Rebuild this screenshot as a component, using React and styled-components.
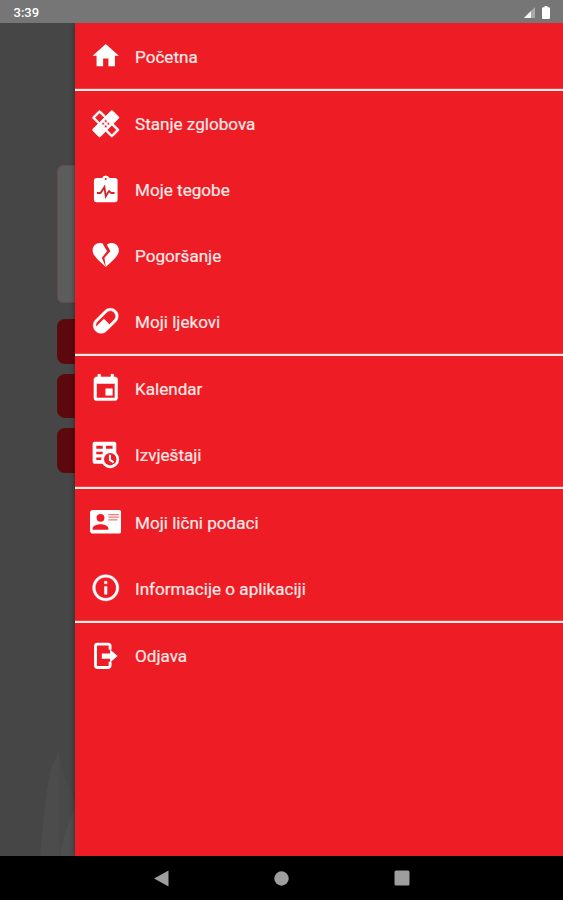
import React from 'react';
import styled, { createGlobalStyle } from 'styled-components';
import { MdHome, MdHealing, MdEvent, MdInfoOutline } from 'react-icons/md';

const GlobalStyle = createGlobalStyle`
  * {
    box-sizing: border-box;
  }

  body {
    margin: 0;
    background: #000;
    font-family: Roboto, 'Liberation Sans', sans-serif;
  }
`;

const Screen = styled.div`
  display: flex;
  flex-direction: column;
  width: 100%;
  height: 100vh;
  overflow: hidden;
`;

const StatusBar = styled.header`
  display: flex;
  align-items: center;
  justify-content: space-between;
  flex: none;
  height: 23px;
  padding: 2px 13px 0 13.5px;
  background: #767676;
`;

const Clock = styled.span`
  color: #fff;
  font-size: 13px;
  font-weight: 500;
`;

const StatusIcons = styled.div`
  display: flex;
  align-items: center;
  gap: 7px;

  svg {
    display: block;
  }
`;

const Body = styled.div`
  position: relative;
  flex: 1;
  min-height: 0;
  overflow: hidden;
  background: #464646;
`;

const Wave = styled.svg`
  position: absolute;
  left: 40px;
  bottom: 0;
`;

// Página por baixo do menu
const Page = styled.main`
  display: flex;
  flex-direction: column;
  gap: 10px;
  padding: 142px 57px 0;
`;

const Card = styled.div`
  height: 138px;
  margin-bottom: 6px;
  border: 1px solid #674a4a;
  border-radius: 6px;
  background: #5b5c5b;
`;

const PageButton = styled.div`
  height: 44.5px;
  border-radius: 8px;
  background: #5b090d;
`;

const Drawer = styled.nav`
  position: absolute;
  top: 0;
  right: 0;
  bottom: 0;
  left: 75px;
  background: #ee1c24;
  box-shadow: 0 0 5px rgba(0, 0, 0, 0.45);
`;

const Group = styled.ul`
  margin: 0;
  padding: 0;
  list-style: none;

  & + & {
    border-top: 2px solid #ffe9e6;
    box-shadow: 0 -1px 0 #f0453f;
  }
`;

const Item = styled.li`
  display: flex;
  align-items: center;
  height: 65.75px;
  padding: 1.5px 0 0 14.5px;
  gap: 14px;
  color: #fff;
`;

const IconBox = styled.span`
  display: flex;
  flex: none;
  width: 31.5px;
  height: 31.5px;
  margin-top: -1.5px;

  svg {
    width: 100%;
    height: 100%;
    stroke-width: ${({ $weight }) => $weight || 0}px;
  }

  /* o pacote inclui um quadrado vazio de 24x24 */
  svg > path[d^='M0 0h24'] {
    stroke: none;
  }
`;

const Label = styled.span`
  color: #ffe9e8;
  font-size: 17.1px;
  font-weight: 400;
  line-height: 20px;
  -webkit-text-stroke: 0.2px #ffe9e8;
`;

const NavBar = styled.footer`
  display: flex;
  align-items: center;
  justify-content: center;
  flex: none;
  gap: 105px;
  height: 44px;
  background: #000;
`;

const Svg = ({ children }) => (
  <svg viewBox="0 0 24 24" fill="currentColor">
    {children}
  </svg>
);

const ClipboardPulse = () => (
  <Svg>
    <path
      fillRule="evenodd"
      d="M19 3h-4.200a3 3 0 0 0-5.600 0H5a2 2 0 0 0-2 2v14.500a2 2 0 0 0 2 2h14a2 2 0 0 0 2-2V5a2 2 0 0 0-2-2zM12 3a.8.8 0 1 1 0 1.600.8.8 0 0 1 0-1.600z"
    />
    <path
      d="M5.300 14.500h2.700l3-4.500 1 7 2.500-4 1.700 1.500h2.500"
      fill="none"
      stroke="#d5222a"
      strokeWidth="1.400"
    />
  </Svg>
);

const HeartBroken = () => (
  <Svg>
    <path d="M12 21.350l-1.450-1.320C5.400 15.360 2 12.280 2 8.500 2 5.420 4.420 3 7.500 3c.67 0 1.320.12 1.940.33L13 9.350l-4 5 3 7M16.500 3C19.580 3 22 5.420 22 8.500c0 3.780-3.400 6.860-8.550 11.530L12 21.350l-1-7 4.500-5-2.650-5.080C13.870 3.470 15.170 3 16.500 3z" />
  </Svg>
);

const Pill = () => (
  <Svg>
    <path
      fillRule="evenodd"
      stroke="currentColor"
      strokeWidth="0.300"
      d="M4.220 11.290l7.070-7.070c2.350-2.340 6.140-2.340 8.490 0 2.340 2.340 2.340 6.140 0 8.490l-7.070 7.070c-2.350 2.340-6.150 2.340-8.490 0-2.340-2.350-2.340-6.140 0-8.490m1.420 1.420c-1.050 1.040-1.400 2.530-1.040 3.860l5.990-5.980 4.240 4.240 3.530-3.540c1.570-1.560 1.570-4.090 0-5.650-1.560-1.570-4.090-1.570-5.650 0z"
    />
  </Svg>
);

const TableClock = () => (
  <Svg>
    <path
      fillRule="evenodd"
      d="M3.500 2h15A1.500 1.500 0 0 1 20 3.500V16H12v2.800H3.500A1.500 1.500 0 0 1 2 17.300V3.500A1.500 1.500 0 0 1 3.500 2zM4.800 5.200v2.200h4.900V5.200zM12.200 5.200v2.200h5V5.200zM4.800 9.700v2h4.900v-2zM4.800 14v2h4.500v-2z"
    />
    <circle cx="15.400" cy="15.400" r="6.800" />
    <circle cx="15.400" cy="15.400" r="4.700" fill="#ee1c24" />
    <path d="M15.200 12v4l2.800 1.800" fill="none" stroke="currentColor" strokeWidth="1.600" />
  </Svg>
);

const IdCard = () => (
  <Svg>
    <path
      fillRule="evenodd"
      d="M2 3h20c1.050 0 2 .95 2 2v14c0 1.050-.95 2-2 2H2c-1.050 0-2-.95-2-2V5c0-1.050.95-2 2-2m6 10.910C6 13.910 2 15 2 17v1h12v-1c0-2-4-3.090-6-3.090M8 6a3 3 0 0 0 0 6 3 3 0 0 0 0-6z"
    />
    <path d="M14 6.500h8M14 8.500h8M14 10.500h7" stroke="#f4777a" strokeWidth="1" fill="none" />
  </Svg>
);

const Logout = () => (
  <Svg>
    <path
      d="M15.300 7.500V4.600a1.500 1.500 0 0 0-1.500-1.500H5.700a1.500 1.500 0 0 0-1.500 1.500v14.800a1.500 1.500 0 0 0 1.500 1.500h8.100a1.500 1.500 0 0 0 1.500-1.500v-2.900"
      fill="none"
      stroke="currentColor"
      strokeWidth="2.200"
    />
    <path d="M9 10.200h6.300V7.300l5.700 4.900-5.700 4.900v-2.900H9z" />
  </Svg>
);

const groups = [
  [{ label: 'Početna', icon: MdHome }],
  [
    { label: 'Stanje zglobova', icon: MdHealing, weight: 0.5 },
    { label: 'Moje tegobe', icon: ClipboardPulse },
    { label: 'Pogoršanje', icon: HeartBroken },
    { label: 'Moji ljekovi', icon: Pill },
  ],
  [
    { label: 'Kalendar', icon: MdEvent, weight: 0.4 },
    { label: 'Izvještaji', icon: TableClock },
  ],
  [
    { label: 'Moji lični podaci', icon: IdCard },
    { label: 'Informacije o aplikaciji', icon: MdInfoOutline, weight: 0.3 },
  ],
  [{ label: 'Odjava', icon: Logout }],
];

const App = () => (
  <>
    <GlobalStyle />
    <Screen>
      <StatusBar>
        <Clock>3:39</Clock>
        <StatusIcons>
          <svg width="11" height="11" viewBox="0 0 11 11">
            <path d="M0 11L11 0v11z" fill="#a9a9a9" />
            <path d="M0 11l7-7v7z" fill="#f4f4f4" />
          </svg>
          <svg width="8" height="13" viewBox="0 0 8 13">
            <path d="M2.500 0h3v1.200H7.200l.8.8v10.200l-.8.8H.8l-.8-.8V2l.8-.8h1.700z" fill="#fff" />
          </svg>
        </StatusIcons>
      </StatusBar>
      <Body>
        <Wave width="40" height="104" viewBox="0 0 40 104">
          <path d="M0 104C3 75 6 38 11 16L19 0v104z" fill="#4c4c4c" />
          <path d="M19 0v104h21V60C30 40 22 20 19 0z" fill="#494949" />
          <path d="M20 104c3-18 8-35 16-50v50z" fill="#4e4e4e" />
        </Wave>
        <Page>
          <Card />
          <PageButton />
          <PageButton />
          <PageButton />
        </Page>
        <Drawer>
          {groups.map((items, index) => (
            <Group key={index}>
              {items.map(({ label, icon: Icon, weight }) => (
                <Item key={label}>
                  <IconBox $weight={weight}>
                    <Icon />
                  </IconBox>
                  <Label>{label}</Label>
                </Item>
              ))}
            </Group>
          ))}
        </Drawer>
      </Body>
      {/* Botões do sistema */}
      <NavBar>
        <svg width="15" height="17" viewBox="0 0 15 17">
          <path d="M0 8.500L14.500 0.500v16z" fill="#9e9e9e" />
        </svg>
        <svg width="15" height="15" viewBox="0 0 15 15">
          <circle cx="7.500" cy="7.500" r="7.200" fill="#9e9e9e" />
        </svg>
        <svg width="16" height="16" viewBox="0 0 16 16">
          <rect x="0.500" y="0.500" width="15" height="15" rx="1.500" fill="#9e9e9e" />
        </svg>
      </NavBar>
    </Screen>
  </>
);

export default App;
